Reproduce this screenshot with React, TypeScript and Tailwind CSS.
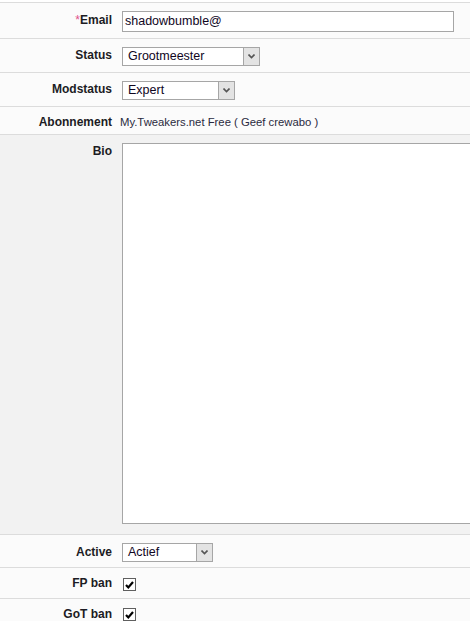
const font = { fontFamily: '"Liberation Sans", Arial, sans-serif' };

function Label({ children, pt }: { children: React.ReactNode; pt: string }) {
  return (
    <div className={`w-[112px] shrink-0 text-right text-[12px] font-bold leading-[14px] text-[#1c1c24] ${pt}`}>
      {children}
    </div>
  );
}

function Select({ value, width }: { value: string; width: string }) {
  return (
    <div className={`flex h-[19px] ${width} items-stretch border border-[#a6a6a6] bg-white`}>
      <div className="flex-1 pl-[5px] text-[12.5px] leading-[17px] text-[#10061e]">{value}</div>
      <div className="flex w-[16px] items-center justify-center border-l border-[#a6a6a6] bg-[#e3e3e3]">
        <svg width="7" height="5" viewBox="0 0 7 5">
          <path d="M0.5 0.5 L3.5 3.5 L6.5 0.5" fill="none" stroke="#555" strokeWidth="1.6" />
        </svg>
      </div>
    </div>
  );
}

function Check() {
  return (
    <div className="flex h-[13px] w-[13px] items-center justify-center border border-[#5f5f5f] bg-white">
      <svg width="9" height="8" viewBox="0 0 9 8">
        <path d="M1 4 L3.3 6.4 L8 1" fill="none" stroke="#000" strokeWidth="2.2" />
      </svg>
    </div>
  );
}

export default function App() {
  return (
    <div className="min-h-[621px] w-[470px] overflow-hidden bg-white pt-[2px]" style={font}>
      <div className="border-t border-[#dcdcdc]">
        {/* Email */}
        <div className="flex h-[36px] border-b border-[#dcdcdc] bg-[#fbfbfb]">
          <Label pt="pt-[10px]">
            <span className="font-normal text-[#e0508a]">*</span>Email
          </Label>
          <div className="pl-[10px] pt-[8px]">
            <div className="h-[21px] w-[332px] border border-[#a6a6a6] bg-white pl-[2px] text-[12.5px] leading-[19px] text-[#10061e]">
              shadowbumble@
            </div>
          </div>
        </div>

        {/* Status */}
        <div className="flex h-[34px] border-b border-[#dcdcdc] bg-[#fbfbfb]">
          <Label pt="pt-[9px]">Status</Label>
          <div className="pl-[10px] pt-[8px]">
            <Select value="Grootmeester" width="w-[138px]" />
          </div>
        </div>

        {/* Modstatus */}
        <div className="flex h-[34px] border-b border-[#dcdcdc] bg-[#fbfbfb]">
          <Label pt="pt-[9px]">Modstatus</Label>
          <div className="pl-[10px] pt-[8px]">
            <Select value="Expert" width="w-[113px]" />
          </div>
        </div>

        {/* Abonnement */}
        <div className="flex h-[28px] border-b border-[#dcdcdc] bg-[#fbfbfb]">
          <Label pt="pt-[8px]">Abonnement</Label>
          <div className="pl-[8px] pt-[8px] text-[11.3px] leading-[14px] text-[#2a2a40]">
            My.Tweakers.net Free ( Geef crewabo )
          </div>
        </div>

        {/* Bio */}
        <div className="flex h-[400px] border-b border-[#dcdcdc] bg-[#f2f2f2]">
          <Label pt="pt-[9px]">Bio</Label>
          <div className="flex-1 pl-[10px] pt-[8px]">
            <div className="h-[381px] w-[360px] border border-r-0 border-[#a6a6a6] bg-white" />
          </div>
        </div>

        {/* Active */}
        <div className="flex h-[33px] border-b border-[#dcdcdc] bg-[#fbfbfb]">
          <Label pt="pt-[10px]">Active</Label>
          <div className="pl-[10px] pt-[8px]">
            <Select value="Actief" width="w-[91px]" />
          </div>
        </div>

        {/* FP ban */}
        <div className="flex h-[31px] border-b border-[#dcdcdc] bg-[#fbfbfb]">
          <Label pt="pt-[8px]">FP ban</Label>
          <div className="pl-[11px] pt-[10px]">
            <Check />
          </div>
        </div>

        {/* GoT ban */}
        <div className="flex h-[31px] bg-[#fbfbfb]">
          <Label pt="pt-[8px]">GoT ban</Label>
          <div className="pl-[11px] pt-[9px]">
            <Check />
          </div>
        </div>
      </div>
    </div>
  );
}
